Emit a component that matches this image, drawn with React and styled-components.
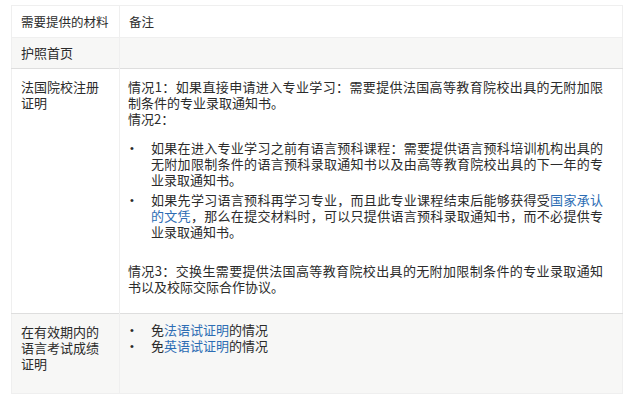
import React from 'react';
import styled, { createGlobalStyle } from 'styled-components';

const GlobalStyle = createGlobalStyle`
  html, body {
    margin: 0;
    padding: 0;
    background: #fff;
  }
  body {
    font-family: "Noto Sans CJK SC", "Noto Sans", sans-serif;
    color: #2b2b2b;
  }
`;

const Page = styled.div`
  padding: 5px 1px 0 11px;
`;

const Table = styled.table`
  width: 612px;
  table-layout: fixed;
  border-collapse: collapse;
  border: 1px solid #efefef;
  font-size: 13px;
  line-height: 16px;
`;

const Row = styled.tr`
  background: ${props => (props.shaded ? '#f7f7f6' : '#fff')};
  border-bottom: 1px solid #dedede;

  &:last-child {
    border-bottom: 1px solid #efefef;
  }
`;

const Cell = styled.td`
  vertical-align: top;
  text-align: ${props => (props.justify ? 'justify' : 'left')};
  padding: ${props => props.pad || '7px 8px'};
  border-right: 1px solid #efefef;
  box-sizing: border-box;

  &:last-child {
    border-right: none;
  }
`;

const HeadCell = styled(Cell).attrs({ as: 'th' })`
  font-weight: normal;
  font-size: 12.5px;
  padding: 8px 8px 7px 9px;
`;

const Para = styled.p`
  margin: 0;
`;

const List = styled.ul`
  list-style: none;
  margin: ${props => props.m || '0'};
  padding: 0;
`;

const Item = styled.li`
  display: flex;
  margin-bottom: ${props => props.gap || '4px'};

  &:last-child {
    margin-bottom: 0;
  }
`;

const Dot = styled.span`
  flex: 0 0 23px;
  font-size: 11px;
  font-family: "Liberation Sans", sans-serif;
  padding-left: 2px;
  box-sizing: border-box;
`;

const ItemText = styled.span`
  flex: 1;
  text-align: justify;
`;

const Link = styled.a`
  color: #2d6db4;
  text-decoration: none;
`;

export default function App() {
  return (
    <>
      <GlobalStyle />
      <Page>
        <Table>
          <colgroup>
            <col style={{ width: 108 }} />
            <col />
          </colgroup>
          <thead>
            <Row>
              <HeadCell>需要提供的材料</HeadCell>
              <HeadCell>备注</HeadCell>
            </Row>
          </thead>
          <tbody>
            <Row shaded>
              <Cell pad="7px 8px 7px 9px">护照首页</Cell>
              <Cell />
            </Row>
            <Row>
              <Cell pad="10px 12px 10px 9px">法国院校注册证明</Cell>
              <Cell justify pad="10px 19px 18px 8px">
                <Para>情况1：如果直接申请进入专业学习：需要提供法国高等教育院校出具的无附加限制条件的专业录取通知书。</Para>
                <Para>情况2：</Para>
                <List m="13px 0 23px">
                  <Item>
                    <Dot>•</Dot>
                    <ItemText>如果在进入专业学习之前有语言预科课程：需要提供语言预科培训机构出具的无附加限制条件的语言预科录取通知书以及由高等教育院校出具的下一年的专业录取通知书。</ItemText>
                  </Item>
                  <Item>
                    <Dot>•</Dot>
                    <ItemText>如果先学习语言预科再学习专业，而且此专业课程结束后能够获得受<Link href="#">国家承认的文凭</Link>，那么在提交材料时，可以只提供语言预科录取通知书，而不必提供专业录取通知书。</ItemText>
                  </Item>
                </List>
                <Para>情况3：交换生需要提供法国高等教育院校出具的无附加限制条件的专业录取通知书以及校际交际合作协议。</Para>
              </Cell>
            </Row>
            <Row shaded>
              <Cell pad="10px 12px 21px 9px">在有效期内的语言考试成绩证明</Cell>
              <Cell pad="8px 19px 8px 8px">
                <List>
                  <Item gap="0">
                    <Dot>•</Dot>
                    <ItemText>免<Link href="#">法语试证明</Link>的情况</ItemText>
                  </Item>
                  <Item>
                    <Dot>•</Dot>
                    <ItemText>免<Link href="#">英语试证明</Link>的情况</ItemText>
                  </Item>
                </List>
              </Cell>
            </Row>
          </tbody>
        </Table>
      </Page>
    </>
  );
}
